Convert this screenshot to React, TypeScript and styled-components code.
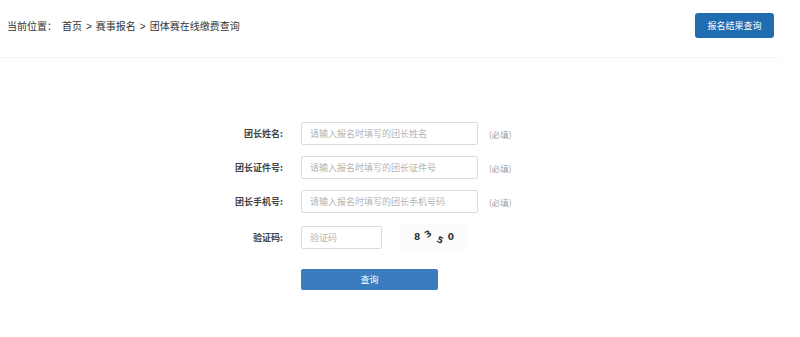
import React, { ReactElement } from 'react';
import styled, { createGlobalStyle } from 'styled-components';

const GlobalStyle = createGlobalStyle`
  body {
    margin: 0;
    background: #fff;
    font-family: "Noto Sans CJK SC", "Noto Sans", sans-serif;
    color: #333;
  }
`;

const fields = [
  { label: '团长姓名:', placeholder: '请输入报名时填写的团长姓名' },
  { label: '团长证件号:', placeholder: '请输入报名时填写的团长证件号' },
  { label: '团长手机号:', placeholder: '请输入报名时填写的团长手机号码' },
];

const captcha = [
  { ch: '8', rot: 0, dy: 0 },
  { ch: '3', rot: -35, dy: -3 },
  { ch: '5', rot: 25, dy: 3 },
  { ch: '0', rot: 0, dy: 0 },
];

export default function App(): ReactElement {
  return (
    <Page>
      <GlobalStyle />
      <Header>
        <Crumbs>
          当前位置：<CrumbLink>首页</CrumbLink>
          <Sep>&gt;</Sep>赛事报名<Sep>&gt;</Sep>团体赛在线缴费查询
        </Crumbs>
        <TopButton>报名结果查询</TopButton>
      </Header>
      <Form>
        {fields.map((f) => (
          <React.Fragment key={f.label}>
            <Label>{f.label}</Label>
            <Input placeholder={f.placeholder} $w={177} />
            <Hint>(必填)</Hint>
          </React.Fragment>
        ))}
        <Label>验证码:</Label>
        <CaptchaCell>
          <Input placeholder="验证码" $w={81} />
          <Captcha>
            {captcha.map((c, i) => (
              <Digit key={i} $rot={c.rot} $dy={c.dy}>
                {c.ch}
              </Digit>
            ))}
          </Captcha>
        </CaptchaCell>
        <span />
        <span />
        <SubmitButton>查询</SubmitButton>
      </Form>
    </Page>
  );
}

const Page = styled.div`
  width: 800px;
  height: 337px;
  overflow: hidden;
`;

const Header = styled.div`
  display: flex;
  justify-content: space-between;
  align-items: center;
  margin: 0 20px 0 0;
  padding: 13px 6px 19px 7px;
  border-bottom: 1px solid #f5f5f5;
`;

const Crumbs = styled.div`
  font-size: 10px;
  color: #333;
  white-space: pre;
`;

const CrumbLink = styled.span`
  margin-left: 5px;
`;

const Sep = styled.span`
  margin: 0 4px;
  font-family: "Liberation Sans", sans-serif;
`;

const TopButton = styled.button`
  width: 79px;
  height: 25px;
  border: none;
  border-radius: 3px;
  background: #1f6cb0;
  color: #fff;
  font-family: inherit;
  font-size: 9px;
  padding: 0;
`;

const Form = styled.div`
  display: grid;
  grid-template-columns: 80px 177px auto;
  column-gap: 18px;
  row-gap: 11px;
  align-items: center;
  margin: 64px 0 0 203px;
  width: 340px;
  & > :nth-child(3n) {
    margin-left: -7px;
  }
`;

const Label = styled.div`
  text-align: right;
  font-size: 9px;
  font-weight: bold;
  color: #444;
`;

const Input = styled.input<{ $w: number }>`
  box-sizing: border-box;
  width: ${({ $w }) => $w}px;
  height: 23px;
  border: 1px solid #dcdcdc;
  border-radius: 2px;
  padding: 0 8px;
  font-family: inherit;
  font-size: 9px;
  color: #333;
  outline: none;
  &::placeholder {
    color: #b4b4b4;
  }
`;

const Hint = styled.div`
  font-size: 8.5px;
  color: #a0a0a0;
`;

const CaptchaCell = styled.div`
  display: flex;
  align-items: center;
  gap: 19px;
`;

const Captcha = styled.div`
  display: flex;
  align-items: center;
  gap: 5px;
  width: 66px;
  height: 26px;
  padding-left: 13px;
  box-sizing: border-box;
  background: #fbfbfb;
`;

const Digit = styled.span<{ $rot: number; $dy: number }>`
  display: inline-block;
  font-family: "DejaVu Sans", sans-serif;
  font-weight: bold;
  font-size: 9px;
  color: #333;
  transform: translateY(${({ $dy }) => $dy}px) rotate(${({ $rot }) => $rot}deg);
`;

const SubmitButton = styled.button`
  grid-column: 2 / 4;
  margin-top: 8px;
  width: 137px;
  height: 21px;
  border: none;
  border-radius: 2px;
  background: #3a7cbd;
  color: #fff;
  font-family: inherit;
  font-size: 9px;
  padding: 0;
`;
